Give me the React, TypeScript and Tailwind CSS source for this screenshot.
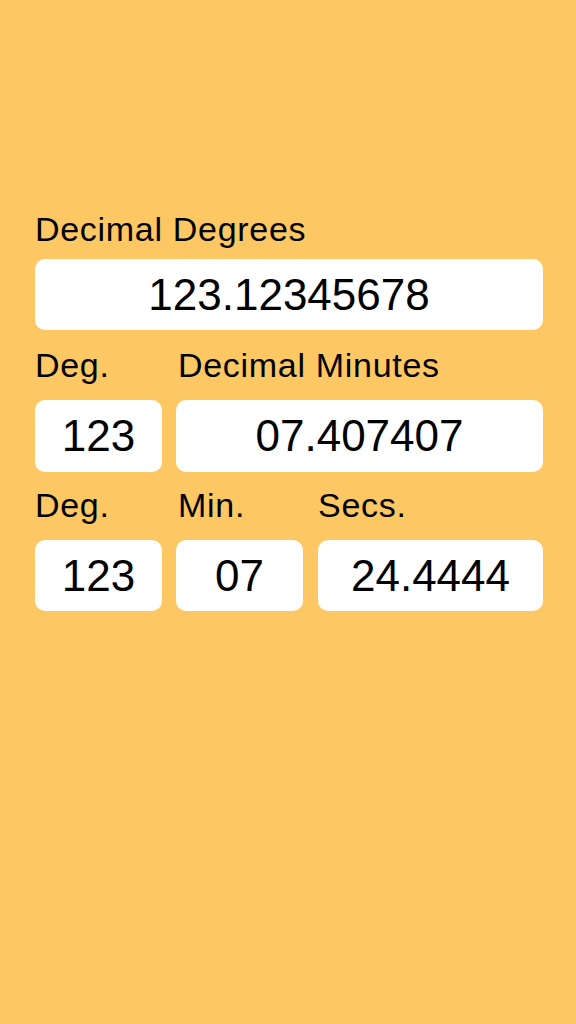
import React from "react";

const font = { fontFamily: '"Liberation Sans", Arial, sans-serif' };

function Box({ value, className = "" }: { value: string; className?: string }) {
  return (
    <div
      className={`bg-white rounded-[10px] flex items-center justify-center text-[44px] leading-none text-black ${className}`}
    >
      {value}
    </div>
  );
}

function Label({ text, className = "" }: { text: string; className?: string }) {
  return (
    <div className={`text-[34px] tracking-[0.7px] leading-[40px] text-black whitespace-nowrap ${className}`}>
      {text}
    </div>
  );
}

export default function App() {
  return (
    <div className="w-[576px] h-[1024px] bg-[#FDC864] overflow-hidden" style={font}>
      <div className="ml-[35px] w-[508px] pt-[209px] flex flex-col">
        <Label text="Decimal Degrees" />
        <Box value="123.12345678" className="mt-[10px] h-[71px] w-full" />

        <div className="mt-[15px] flex gap-[14px]">
          <Label text="Deg." className="w-[127px]" />
          <Label text="Decimal Minutes" className="flex-1 pl-[2px]" />
        </div>
        <div className="mt-[15px] flex gap-[14px]">
          <Box value="123" className="w-[127px] h-[72px]" />
          <Box value="07.407407" className="flex-1 h-[72px]" />
        </div>

        <div className="mt-[13px] flex">
          <Label text="Deg." className="w-[127px]" />
          <Label text="Min." className="ml-[14px] w-[127px] pl-[2px]" />
          <Label text="Secs." className="ml-[15px] flex-1" />
        </div>
        <div className="mt-[15px] flex">
          <Box value="123" className="w-[127px] h-[71px]" />
          <Box value="07" className="ml-[14px] w-[127px] h-[71px]" />
          <Box value="24.4444" className="ml-[15px] flex-1 h-[71px]" />
        </div>
      </div>
    </div>
  );
}
